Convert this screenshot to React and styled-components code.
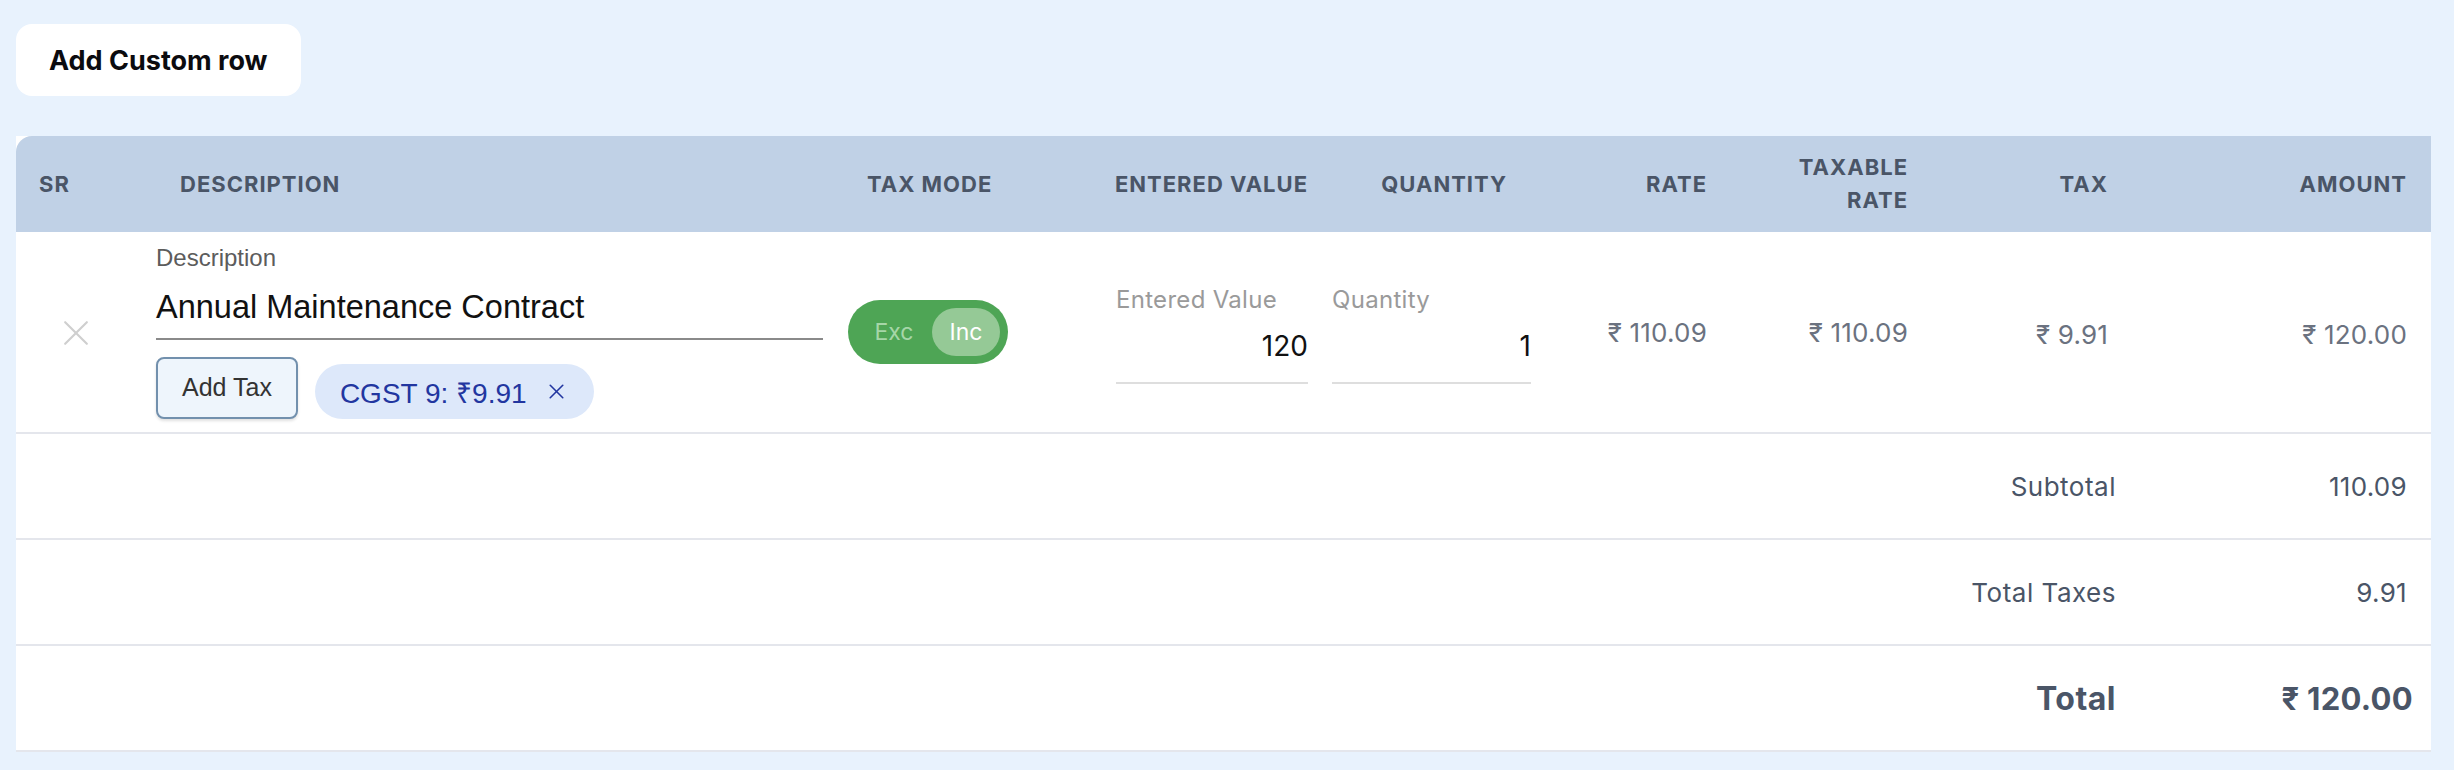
import React, { useState } from "react";
import styled, { createGlobalStyle } from "styled-components";

const GRID = "124px 700px 262px 214px 223px 176px 201px 200px 1fr";
const UI_FONT = `Inter, "Noto Sans", sans-serif`;
const FIELD_FONT = `"Liberation Sans", "Noto Sans", "DejaVu Sans", sans-serif`;

const GlobalStyle = createGlobalStyle`
  * { box-sizing: border-box; }
  body {
    margin: 0;
    background: #e8f2fd;
    font-family: ${UI_FONT};
  }
`;

const Page = styled.div`
  padding: 24px 23px 17px 16px;
  background: #e8f2fd;
`;

const CustomRowButton = styled.button`
  height: 72px;
  padding: 0 33px;
  border: none;
  border-radius: 16px;
  background: #ffffff;
  font-family: ${UI_FONT};
  font-size: 27px;
  font-weight: 700;
  color: #0b0b0f;
  cursor: pointer;
`;

const Table = styled.div`
  margin-top: 40px;
  background: #ffffff;
`;

const HeaderRow = styled.div`
  display: grid;
  grid-template-columns: ${GRID};
  align-items: center;
  height: 96px;
  background: #c0d1e6;
  border-radius: 16px 0 0 0;
`;

const HeadCell = styled.div`
  padding: ${(p) => p.$pad ?? "0"};
  text-align: ${(p) => p.$align ?? "left"};
  font-size: 22px;
  line-height: 33px;
  font-weight: 700;
  letter-spacing: 1px;
  color: #4a5567;
  text-transform: uppercase;
`;

const ItemRow = styled.div`
  display: grid;
  grid-template-columns: ${GRID};
  align-items: center;
  border-bottom: 2px solid #e4e6ec;
`;

const Cell = styled.div`
  padding: ${(p) => p.$pad ?? "0"};
  text-align: ${(p) => p.$align ?? "left"};
`;

const DescCell = styled.div`
  padding: 12px 17px 13px 16px;
`;

const FieldLabel = styled.div`
  font-family: ${FIELD_FONT};
  font-size: 24px;
  line-height: 28px;
  color: #5c5c5c;
`;

const DescInput = styled.div`
  padding: 15px 0 11px;
  border-bottom: 2px solid #8a8a8a;
  font-family: ${FIELD_FONT};
  font-size: 32.5px;
  line-height: 40px;
  color: #111111;
`;

const TaxRow = styled.div`
  display: flex;
  align-items: center;
  gap: 17px;
  margin-top: 16px;
`;

const AddTaxButton = styled.button`
  height: 62px;
  padding: 0 24px;
  border: 2px solid #7290ad;
  border-radius: 8px;
  background: #eef5fc;
  box-shadow: 0 2px 3px rgba(0, 0, 0, 0.12);
  font-family: ${FIELD_FONT};
  font-size: 25px;
  color: #333333;
  cursor: pointer;
`;

const Chip = styled.div`
  display: flex;
  align-items: center;
  gap: 22px;
  height: 55px;
  margin-top: 8px;
  padding: 0 30px 0 25px;
  border-radius: 28px;
  background: #dde8fa;
  font-family: ${FIELD_FONT};
  font-size: 28px;
  color: #2236a0;
`;

const Toggle = styled.div`
  display: flex;
  align-items: center;
  width: 160px;
  height: 64px;
  padding: 8px;
  border-radius: 32px;
  background: #4ea555;
  cursor: pointer;
`;

const ToggleText = styled.span`
  flex: 1;
  text-align: center;
  font-size: 23px;
  color: #a6d6a8;
`;

const Knob = styled.span`
  display: flex;
  align-items: center;
  justify-content: center;
  width: 68px;
  height: 48px;
  border-radius: 24px;
  background: #95c996;
  font-size: 23px;
  color: #ffffff;
`;

const NumberField = styled.div`
  display: flex;
  flex-direction: column;
  margin-top: 5px;
`;

const NumberLabel = styled.div`
  font-size: 24px;
  line-height: 28px;
  letter-spacing: 0.3px;
  color: #9a9a9a;
`;

const NumberInput = styled.div`
  padding: 15px 0 19px;
  border-bottom: 2px solid #dedede;
  text-align: right;
  font-size: 28px;
  line-height: 34px;
  color: #111111;
`;

const Money = styled.div`
  padding: ${(p) => p.$pad ?? "0 8px 0 0"};
  margin-top: ${(p) => p.$lift ?? "0"};
  text-align: right;
  font-size: 26px;
  letter-spacing: 0.2px;
  color: #6b7280;
`;

const SummaryRow = styled.div`
  display: flex;
  justify-content: flex-end;
  align-items: center;
  height: 106px;
  border-bottom: 2px solid #e4e6ec;
  color: #4a5567;
`;

const SummaryLabel = styled.div`
  text-align: right;
  font-size: ${(p) => (p.$strong ? "32px" : "26px")};
  font-weight: ${(p) => (p.$strong ? 700 : 400)};
  letter-spacing: 0.5px;
`;

const SummaryValue = styled.div`
  width: 315px;
  padding-right: ${(p) => (p.$strong ? "18px" : "24px")};
  text-align: right;
  font-size: ${(p) => (p.$strong ? "31px" : "26px")};
  font-weight: ${(p) => (p.$strong ? 700 : 400)};
  letter-spacing: 0.3px;
`;

const RemoveIcon = ({ size = 26, color = "#cfcfcf", width = 2 }) => (
  <svg width={size} height={size} viewBox="0 0 24 24" fill="none" stroke={color} strokeWidth={width} strokeLinecap="round">
    <line x1="2" y1="2" x2="22" y2="22" />
    <line x1="22" y1="2" x2="2" y2="22" />
  </svg>
);

const headers = [
  { label: "SR", pad: "0 0 0 23px" },
  { label: "Description", pad: "0 0 0 40px" },
  { label: "Tax Mode", pad: "0 0 0 27px" },
  { label: "Entered Value", pad: "0 8px 0 0", align: "right" },
  { label: "Quantity", pad: "0 32px 0 0", align: "right" },
  { label: "Rate", pad: "0 8px 0 0", align: "right" },
  { label: <>Taxable<br />Rate</>, pad: "0 8px 0 0", align: "right" },
  { label: "Tax", pad: "0 8px 0 0", align: "right" },
  { label: "Amount", pad: "0 24px 0 0", align: "right" },
];

const summary = [
  { label: "Subtotal", value: "110.09" },
  { label: "Total Taxes", value: "9.91" },
  { label: "Total", value: "₹ 120.00", strong: true },
];

export default function App() {
  const [inclusive, setInclusive] = useState(true);

  return (
    <Page>
      <GlobalStyle />
      <CustomRowButton>Add Custom row</CustomRowButton>
      <Table>
        <HeaderRow>
          {headers.map((h, i) => (
            <HeadCell key={i} $pad={h.pad} $align={h.align}>
              {h.label}
            </HeadCell>
          ))}
        </HeaderRow>

        <ItemRow>
          <Cell $pad="6px 0 0 47px">
            <RemoveIcon />
          </Cell>
          <DescCell>
            <FieldLabel>Description</FieldLabel>
            <DescInput>Annual Maintenance Contract</DescInput>
            <TaxRow>
              <AddTaxButton>Add Tax</AddTaxButton>
              <Chip>
                CGST 9: ₹9.91
                <RemoveIcon size={15} color="#2236a0" width={2.6} />
              </Chip>
            </TaxRow>
          </DescCell>
          <Cell $pad="0 0 0 8px">
            <Toggle onClick={() => setInclusive((v) => !v)}>
              <ToggleText>Exc</ToggleText>
              <Knob>Inc</Knob>
            </Toggle>
          </Cell>
          <Cell $pad="0 8px 0 14px">
            <NumberField>
              <NumberLabel>Entered Value</NumberLabel>
              <NumberInput>120</NumberInput>
            </NumberField>
          </Cell>
          <Cell $pad="0 8px 0 16px">
            <NumberField>
              <NumberLabel>Quantity</NumberLabel>
              <NumberInput>1</NumberInput>
            </NumberField>
          </Cell>
          <Money>₹ 110.09</Money>
          <Money>₹ 110.09</Money>
          <Money $lift="4px">₹ 9.91</Money>
          <Money $pad="0 24px 0 0" $lift="4px">₹ 120.00</Money>
        </ItemRow>

        {summary.map((s) => (
          <SummaryRow key={s.label}>
            <SummaryLabel $strong={s.strong}>{s.label}</SummaryLabel>
            <SummaryValue $strong={s.strong}>{s.value}</SummaryValue>
          </SummaryRow>
        ))}
      </Table>
    </Page>
  );
}
